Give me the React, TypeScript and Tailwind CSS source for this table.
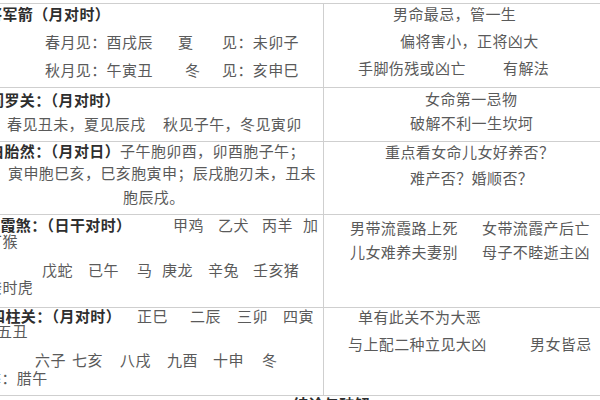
import React from "react";

const font = { fontFamily: '"Noto Sans CJK SC", "Noto Sans", sans-serif' };

function Line({ className = "", children }: { className?: string; children: React.ReactNode }) {
  return <div className={`flex h-[16px] whitespace-nowrap leading-[16px] ${className}`}>{children}</div>;
}

function B({ children, className = "" }: { children: React.ReactNode; className?: string }) {
  return <span className={`shrink-0 font-bold text-[#2e2e2e] ${className}`}>{children}</span>;
}

function S({ children, className = "" }: { children: React.ReactNode; className?: string }) {
  return <span className={`shrink-0 ${className}`}>{children}</span>;
}

export default function App() {
  return (
    <div
      className="h-[400px] w-[600px] overflow-hidden bg-white pt-[3px] text-[15px] tracking-[0.4px] text-[#5a5a5a]"
      style={font}
    >
      <div className="-ml-[20px] w-[920px] border-t border-[#cfcfcf]">
        {/* Row 1 */}
        <div className="flex h-[84px] border-b border-[#cfcfcf]">
          <div className="w-[344px] shrink-0 border-r border-[#cfcfcf]">
            <Line className="mt-[2px] pl-[7px]">
              <B>将军箭（月对时）</B>
            </Line>
            <Line className="mt-[12px] pl-[65px]">
              <S className="w-[133px]">春月见：酉戌辰</S>
              <S className="w-[44px]">夏</S>
              <S>见：未卯子</S>
            </Line>
            <Line className="mt-[12px] pl-[65px]">
              <S className="w-[140px]">秋月见：午寅丑</S>
              <S className="w-[37px]">冬</S>
              <S>见：亥申巳</S>
            </Line>
          </div>
          <div className="flex-1">
            <Line className="mt-[2px] pl-[69px]">男命最忌，管一生</Line>
            <Line className="mt-[11px] pl-[76px]">偏将害小，正将凶大</Line>
            <Line className="mt-[11px] pl-[34px]">
              <S className="w-[145px]">手脚伤残或凶亡</S>
              <S>有解法</S>
            </Line>
          </div>
        </div>

        {/* Row 2 */}
        <div className="flex h-[54px] border-b border-[#cfcfcf]">
          <div className="w-[344px] shrink-0 border-r border-[#cfcfcf]">
            <Line className="mt-[4px] pl-[9px]">
              <B>阎罗关：（月对时）</B>
            </Line>
            <Line className="mt-[8px] pl-[27px]">
              <S className="w-[156px]">春见丑未，夏见辰戌</S>
              <S>秋见子午，冬见寅卯</S>
            </Line>
          </div>
          <div className="flex-1">
            <Line className="mt-[3px] pl-[101px]">女命第一忌物</Line>
            <Line className="mt-[8px] pl-[86px]">破解不利一生坎坷</Line>
          </div>
        </div>

        {/* Row 3 */}
        <div className="flex h-[73px] border-b border-[#cfcfcf]">
          <div className="w-[344px] shrink-0 overflow-hidden border-r border-[#cfcfcf]">
            <Line className="mt-[1px] pl-[9px]">
              <B>白胎然：（月对日）</B>
              <S>子午胞卯酉，卯酉胞子午；</S>
            </Line>
            <Line className="mt-[6px] pl-[28px]">寅申胞巳亥，巳亥胞寅申；辰戌胞刃未，丑未</Line>
            <Line className="mt-[8px] pl-[143px]">胞辰戌。</Line>
          </div>
          <div className="flex-1">
            <Line className="mt-[2px] pl-[61px]">重点看女命儿女好养否？</Line>
            <Line className="mt-[10px] pl-[86px]">难产否？婚顺否？</Line>
          </div>
        </div>

        {/* Row 4 */}
        <div className="flex h-[93px] border-b border-[#cfcfcf]">
          <div className="w-[344px] shrink-0 overflow-hidden border-r border-[#cfcfcf]">
            <Line className="mt-[2px] pl-[5px]">
              <B className="w-[188px]">流霞煞：（日干对时）</B>
              <S className="w-[45px]">甲鸡</S>
              <S className="w-[44px]">乙犬</S>
              <S className="w-[41px]">丙羊</S>
              <S>加</S>
            </Line>
            <Line className="mt-0 pl-[7px]">丁猴</Line>
            <Line className="mt-[13px] pl-[62px]">
              <S className="w-[46px]">戊蛇</S>
              <S className="w-[49px]">已午</S>
              <S className="w-[25px]">马</S>
              <S className="w-[46px]">庚龙</S>
              <S className="w-[45px]">辛兔</S>
              <S>壬亥猪</S>
            </Line>
            <Line className="mt-[1px] pl-[7px]">癸时虎</Line>
          </div>
          <div className="flex-1">
            <Line className="mt-[5px] pl-[26px]">
              <S className="w-[132px]">男带流霞路上死</S>
              <S>女带流霞产后亡</S>
            </Line>
            <Line className="mt-[8px] pl-[26px]">
              <S className="w-[132px]">儿女难养夫妻别</S>
              <S>母子不睦逝主凶</S>
            </Line>
          </div>
        </div>

        {/* Row 5 */}
        <div className="flex h-[88px] border-b border-[#cfcfcf]">
          <div className="w-[344px] shrink-0 overflow-hidden border-r border-[#cfcfcf]">
            <Line className="mt-0 pl-[10px]">
              <B className="w-[147px]">四柱关：（月对时）</B>
              <S className="w-[53px]">正巳</S>
              <S className="w-[47px]">二辰</S>
              <S className="w-[46px]">三卯</S>
              <S>四寅</S>
            </Line>
            <Line className="-mt-[1px] pl-[17px]">五丑</Line>
            <Line className="mt-[13px] pl-[55px]">
              <S className="w-[37px]">六子</S>
              <S className="w-[48px]">七亥</S>
              <S className="w-[47px]">八戌</S>
              <S className="w-[46px]">九酉</S>
              <S className="w-[49px]">十申</S>
              <S>冬</S>
            </Line>
            <Line className="mt-[2px] pl-[6px]">季：腊午</Line>
          </div>
          <div className="flex-1">
            <Line className="mt-[1px] pl-[34px]">单有此关不为大恶</Line>
            <Line className="mt-[11px] pl-[24px]">
              <S className="w-[182px]">与上配二种立见大凶</S>
              <S>男女皆忌</S>
            </Line>
          </div>
        </div>

        <Line className="pl-[313px]">
          <B>结论与破解</B>
        </Line>
      </div>
    </div>
  );
}
